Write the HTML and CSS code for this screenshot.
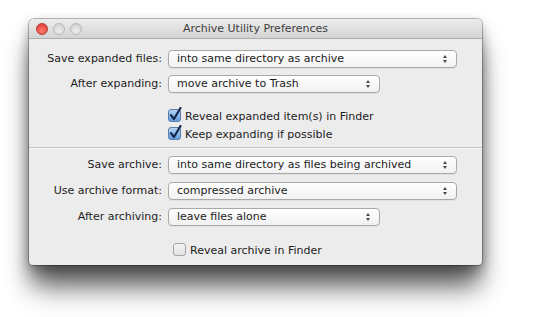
FILE: index.html
```html
<!DOCTYPE html>
<html lang="en">
<head>
    <meta charset="UTF-8">
    <title>Archive Utility Preferences</title>
    <link rel="stylesheet" href="styles.css">
</head>
<body>
    <div class="window">
        <div class="titlebar">
            <div class="lights">
                <span class="light red"></span>
                <span class="light"></span>
                <span class="light"></span>
            </div>
            <div class="title">Archive Utility Preferences</div>
        </div>

        <div class="section first">
            <div class="row">
                <label>Save expanded files:</label>
                <div class="popup wide">into same directory as archive<span class="arrows"></span></div>
            </div>
            <div class="row">
                <label>After expanding:</label>
                <div class="popup narrow">move archive to Trash<span class="arrows"></span></div>
            </div>
            <div class="checks">
                <div class="check on"><span class="box"><svg width="14" height="15" viewBox="0 0 14 15"><defs><linearGradient id="g1" x1="0" y1="0" x2="0" y2="1"><stop offset="0" stop-color="#b9d6f5"/><stop offset="1" stop-color="#5d9be0"/></linearGradient></defs><rect x="0.5" y="2.5" width="12" height="12" rx="2.5" fill="url(#g1)" stroke="#5b7ea8"/><path d="M3 8.2 L6 12 L12.5 1" fill="none" stroke="#17284f" stroke-width="2.2" stroke-linecap="round" stroke-linejoin="round"/></svg></span>Reveal expanded item(s) in Finder</div>
                <div class="check on"><span class="box"><svg width="14" height="15" viewBox="0 0 14 15"><rect x="0.5" y="2.5" width="12" height="12" rx="2.5" fill="url(#g1)" stroke="#5b7ea8"/><path d="M3 8.2 L6 12 L12.5 1" fill="none" stroke="#17284f" stroke-width="2.2" stroke-linecap="round" stroke-linejoin="round"/></svg></span>Keep expanding if possible</div>
            </div>
        </div>

        <div class="section second">
            <div class="row">
                <label>Save archive:</label>
                <div class="popup wide">into same directory as files being archived<span class="arrows"></span></div>
            </div>
            <div class="row">
                <label>Use archive format:</label>
                <div class="popup wide">compressed archive<span class="arrows"></span></div>
            </div>
            <div class="row">
                <label>After archiving:</label>
                <div class="popup narrow">leave files alone<span class="arrows"></span></div>
            </div>
            <div class="checks last">
                <div class="check"><span class="box"><svg width="14" height="15" viewBox="0 0 14 15"><defs><linearGradient id="g2" x1="0" y1="0" x2="0" y2="1"><stop offset="0" stop-color="#f4f4f4"/><stop offset="1" stop-color="#e2e2e2"/></linearGradient></defs><rect x="0.5" y="2.5" width="12" height="12" rx="2.5" fill="url(#g2)" stroke="#a4a4a4"/></svg></span>Reveal archive in Finder</div>
            </div>
        </div>
    </div>
</body>
</html>
```

FILE: styles.css
```css
*{
    margin: 0;
    box-sizing: border-box;
}
html, body{
    height: 100%;
}
body{
    background-color: #fff;
    font-family: "DejaVu Sans", sans-serif;
    font-size: 11px;
    color: #1c1c1c;
    padding: 19px 0 0 29px;
}
.window{
    width: 453px;
    background-color: #ececec;
    border-radius: 5px 5px 4px 4px;
    box-shadow: 0 0 0 1px rgba(0, 0, 0, 0.25),
        0 4px 12px rgba(0, 0, 0, 0.3),
        0 20px 22px -2px rgba(0, 0, 0, 0.5),
        0 30px 30px -6px rgba(0, 0, 0, 0.3);
}
.titlebar{
    height: 20px;
    display: flex;
    align-items: center;
    padding-left: 7px;
    background: linear-gradient(#ececec, #d4d4d4);
    border-bottom: 1px solid #adadad;
    border-radius: 5px 5px 0 0;
}
.lights{
    display: flex;
    gap: 5px;
    width: 60px;
}
.light{
    width: 12px;
    height: 12px;
    border-radius: 50%;
    background: radial-gradient(circle at 50% 70%, #efefef, #cbcbcb);
    border: 1px solid #b8b8b8;
}
.light.red{
    background: radial-gradient(circle at 50% 70%, #ff7a70, #d9352d);
    border-color: #b53a33;
}
.title{
    flex: 1;
    text-align: center;
    padding-right: 67px;
    color: #3e3e3e;
    font-size: 11px;
}
.section{
    display: grid;
    grid-template-columns: 133px auto;
    column-gap: 6px;
    align-content: start;
}
.section.first{
    padding-top: 11px;
    padding-bottom: 4px;
    row-gap: 7px;
    border-bottom: 1px solid #c2c2c2;
}
.section.second{
    padding-top: 7px;
    padding-bottom: 6px;
    row-gap: 8px;
    border-top: 1px solid #f8f8f8;
}
.row{
    display: contents;
}
.row label{
    text-align: right;
    line-height: 18px;
    white-space: nowrap;
}
.popup{
    position: relative;
    height: 18px;
    line-height: 16px;
    padding-left: 8px;
    border: 1px solid #a9a9a9;
    border-radius: 4px;
    background: linear-gradient(#ffffff, #f1f1f1);
    box-shadow: 0 1px 0 rgba(0, 0, 0, 0.05);
    white-space: nowrap;
}
.popup.wide{
    width: 289px;
}
.popup.narrow{
    width: 212px;
}
.arrows{
    position: absolute;
    right: 8px;
    top: 4px;
    width: 5px;
    height: 8px;
}
.arrows::before,
.arrows::after{
    content: "";
    position: absolute;
    left: 0;
    border-left: 2.5px solid transparent;
    border-right: 2.5px solid transparent;
}
.arrows::before{
    top: 0;
    border-bottom: 3px solid #4a4a4a;
}
.arrows::after{
    bottom: 0;
    border-top: 3px solid #4a4a4a;
}
.checks{
    grid-column: 2;
    margin-top: 7px;
}
.checks.last{
    margin-top: 7px;
    padding-left: 5px;
}
.check{
    display: flex;
    align-items: center;
    height: 18px;
    white-space: nowrap;
}
.box{
    display: flex;
    width: 17px;
    margin-top: -3px;
}
```
